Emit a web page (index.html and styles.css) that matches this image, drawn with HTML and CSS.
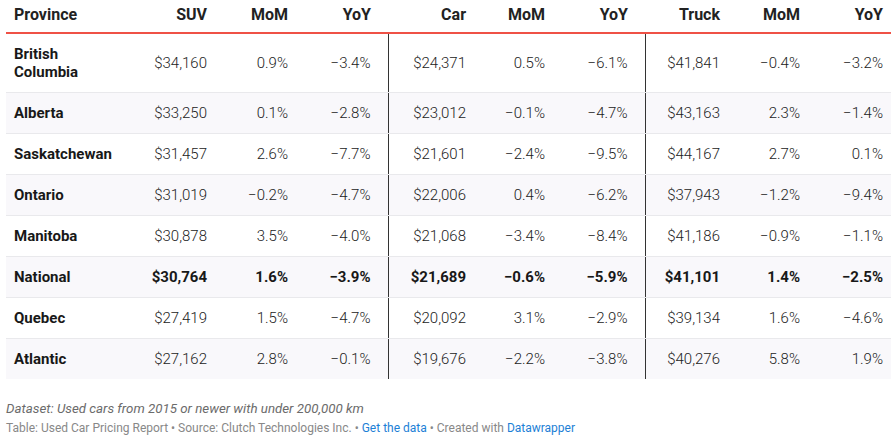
FILE: index.html
```html
<!DOCTYPE html>
<html>
<head>
<meta charset="utf-8">
<link rel="stylesheet" href="styles.css">
</head>
<body>
<div class="wrap">
<table class="tbl">
<colgroup>
<col class="w1"><col class="w2"><col class="w3"><col class="w4"><col class="w5"><col class="w6"><col class="w7"><col class="w8"><col class="w9"><col class="w10">
</colgroup>
<thead>
<tr><th class="lft">Province</th><th>SUV</th><th>MoM</th><th class="bd">YoY</th><th>Car</th><th>MoM</th><th class="bd">YoY</th><th>Truck</th><th>MoM</th><th>YoY</th></tr>
</thead>
<tbody>
<tr><td class="lft">British Columbia</td><td>$34,160</td><td>0.9%</td><td class="bd">−3.4%</td><td>$24,371</td><td>0.5%</td><td class="bd">−6.1%</td><td>$41,841</td><td>−0.4%</td><td>−3.2%</td></tr>
<tr><td class="lft">Alberta</td><td>$33,250</td><td>0.1%</td><td class="bd">−2.8%</td><td>$23,012</td><td>−0.1%</td><td class="bd">−4.7%</td><td>$43,163</td><td>2.3%</td><td>−1.4%</td></tr>
<tr><td class="lft">Saskatchewan</td><td>$31,457</td><td>2.6%</td><td class="bd">−7.7%</td><td>$21,601</td><td>−2.4%</td><td class="bd">−9.5%</td><td>$44,167</td><td>2.7%</td><td>0.1%</td></tr>
<tr><td class="lft">Ontario</td><td>$31,019</td><td>−0.2%</td><td class="bd">−4.7%</td><td>$22,006</td><td>0.4%</td><td class="bd">−6.2%</td><td>$37,943</td><td>−1.2%</td><td>−9.4%</td></tr>
<tr><td class="lft">Manitoba</td><td>$30,878</td><td>3.5%</td><td class="bd">−4.0%</td><td>$21,068</td><td>−3.4%</td><td class="bd">−8.4%</td><td>$41,186</td><td>−0.9%</td><td>−1.1%</td></tr>
<tr class="strong"><td class="lft">National</td><td>$30,764</td><td>1.6%</td><td class="bd">−3.9%</td><td>$21,689</td><td>−0.6%</td><td class="bd">−5.9%</td><td>$41,101</td><td>1.4%</td><td>−2.5%</td></tr>
<tr><td class="lft">Quebec</td><td>$27,419</td><td>1.5%</td><td class="bd">−4.7%</td><td>$20,092</td><td>3.1%</td><td class="bd">−2.9%</td><td>$39,134</td><td>1.6%</td><td>−4.6%</td></tr>
<tr><td class="lft">Atlantic</td><td>$27,162</td><td>2.8%</td><td class="bd">−0.1%</td><td>$19,676</td><td>−2.2%</td><td class="bd">−3.8%</td><td>$40,276</td><td>5.8%</td><td>1.9%</td></tr>
</tbody>
</table>
<div class="notes">Dataset: Used cars from 2015 or newer with under 200,000 km</div>
<div class="source">Table: Used Car Pricing Report • Source: Clutch Technologies Inc. • <a href="#">Get the data</a> • Created with <a href="#">Datawrapper</a></div>
</div>
</body>
</html>
```

FILE: styles.css
```css
html, body {
  margin: 0;
  padding: 0;
  background: #ffffff;
}
body {
  font-family: Roboto, "Liberation Sans", sans-serif;
  color: #181818;
}
.wrap {
  padding: 0 4px 0 6px;
}
.tbl {
  border-collapse: collapse;
  table-layout: fixed;
  width: 885px;
}
.w1 { width: 124px; }
.w2 { width: 85px; }
.w3 { width: 81px; }
.w4 { width: 92px; }
.w5 { width: 86px; }
.w6 { width: 79px; }
.w7 { width: 92px; }
.w8 { width: 83px; }
.w9 { width: 80px; }
.w10 { width: 83px; }

.tbl th {
  font-size: 16px;
  font-weight: 700;
  line-height: 20px;
  padding: 5px 8px 7px 8px;
  text-align: right;
  border-bottom: 2px solid #ef5146;
  color: #222;
}
.tbl td {
  font-size: 15px;
  font-weight: 300;
  line-height: 18px;
  padding: 11px 8px 11px 8px;
  text-align: right;
  border-bottom: 1px solid #e9e9ec;
  color: #222;
  font-variant-numeric: tabular-nums;
}
.tbl tbody tr:nth-child(even) td {
  background: #f9f8fb;
}
.tbl tbody tr:last-child td {
  border-bottom: none;
}
.tbl th.lft,
.tbl td.lft {
  text-align: left;
}
.tbl td.lft {
  font-size: 15px;
  font-weight: 700;
  line-height: 18px;
  color: #181818;
}
.tbl th.bd,
.tbl td.bd {
  padding-right: 17px;
}
.tbl td.bd {
  border-right: 1px solid #333;
}
.tbl tr.strong td {
  font-weight: 700;
  color: #181818;
}
.notes {
  margin-top: 21px;
  font-size: 13.3px;
  font-style: italic;
  line-height: 17px;
  color: #6b6b6b;
}
.source {
  margin-top: 4px;
  font-size: 12px;
  line-height: 15px;
  color: #888;
}
.source a {
  color: #1d7fd6;
  text-decoration: none;
}
```
